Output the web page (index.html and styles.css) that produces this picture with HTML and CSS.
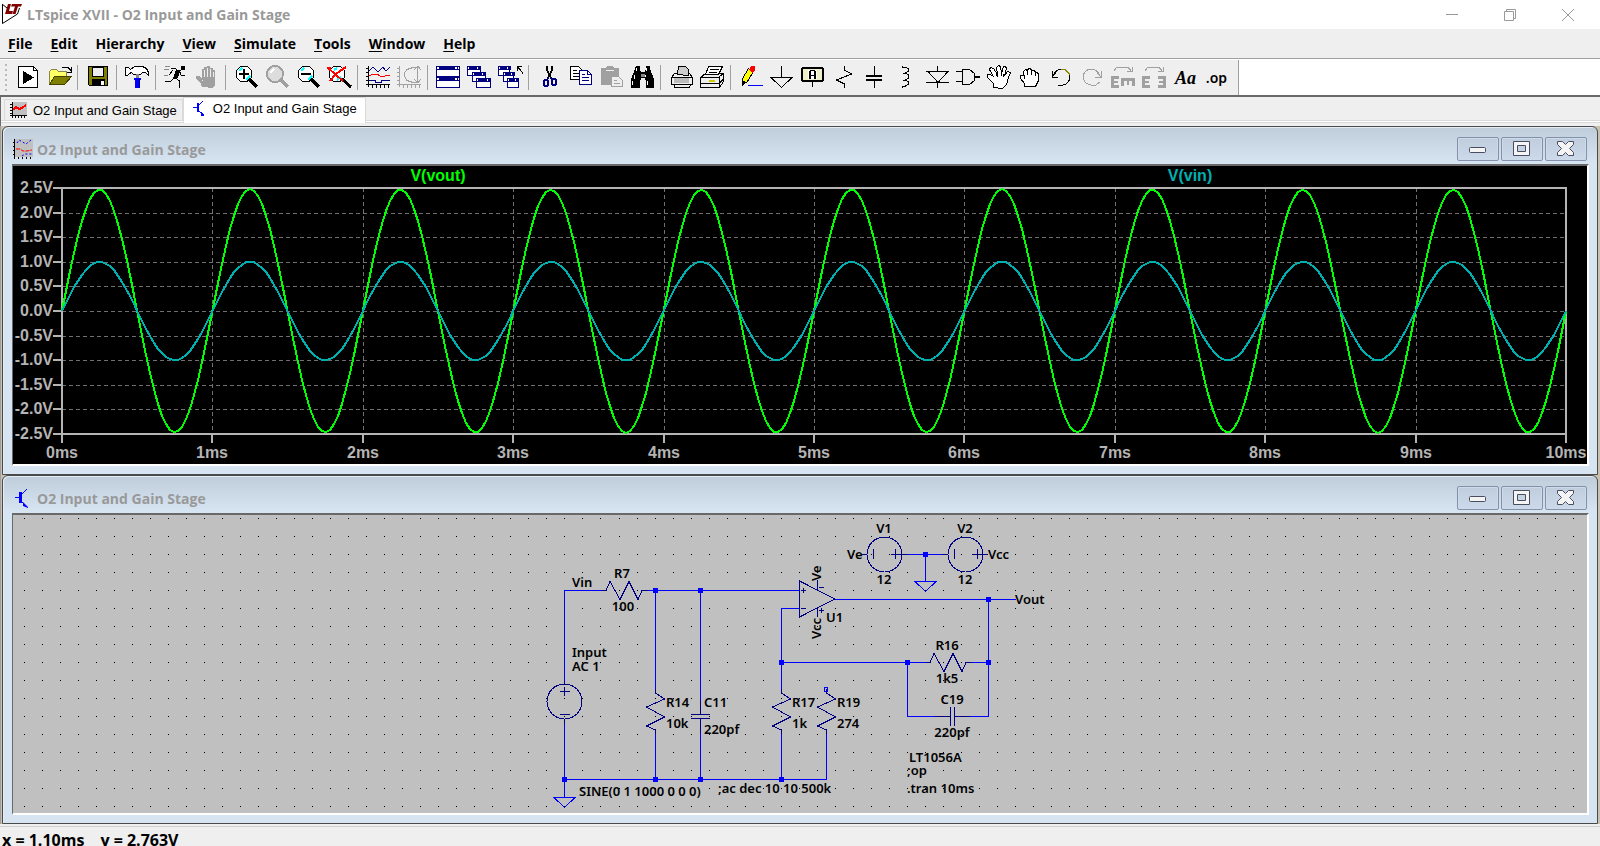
FILE: index.html
```html
<!DOCTYPE html>
<html lang="en">
<head>
    <meta charset="UTF-8">
    <meta name="viewport" content="width=device-width, initial-scale=1.0">
    <title>LTspice XVII - O2 Input and Gain Stage</title>
    <link rel="stylesheet" href="styles.css">
</head>
<body>
    <header class="titlebar">
        <svg class="app-icon" viewBox="0 0 20 21">
            <path d="M.5 0v19.500l15-9.500 2-6M0 0l5 4" fill="none" stroke="#000"/>
            <path d="M6 0h3L7 7h4l-1 3H3z M10 0h10l-1 2.500h-3L13.500 10h-3L13 2.500H9z" fill="#800000"/>
        </svg>
        <h1>LTspice XVII - O2 Input and Gain Stage</h1>
        <div class="win-buttons">
            <button aria-label="Minimize"><svg viewBox="0 0 12 12"><path d="M0 5.500h12"/></svg></button>
            <button aria-label="Restore"><svg viewBox="0 0 12 12"><path d="M.5 2.500h9v9h-9zM2.500 2V.5h9v9H10"/></svg></button>
            <button aria-label="Close"><svg viewBox="0 0 12 12"><path d="M0 0l12 12M12 0L0 12"/></svg></button>
        </div>
    </header>

    <nav class="menu">
        <button><u>F</u>ile</button>
        <button><u>E</u>dit</button>
        <button>H<u>i</u>erarchy</button>
        <button><u>V</u>iew</button>
        <button><u>S</u>imulate</button>
        <button><u>T</u>ools</button>
        <button><u>W</u>indow</button>
        <button><u>H</u>elp</button>
    </nav>

    <div class="toolbar-row">
        <div class="toolbar">
            <span class="grip"></span>
            <button aria-label="New"><svg viewBox="0 0 31 32"><path d="M5.500 4.500h15l4 4v17h-19z" fill="#fff" stroke="#000"/><path d="M20.500 4.500v4h4" fill="none" stroke="#000"/><path d="M10 9v13l11-6.500z"/></svg></button>
            <button aria-label="Open"><svg viewBox="0 0 31 32"><path d="M5.500 22.500V9.500l2-2h5l2 2h8v5" fill="#ff6" stroke="#884"/><path d="M5.500 22.500l5-8h17l-7 8z" fill="#808000" stroke="#440"/><path d="M18 6l2-1h4l3 4m-4 1h4V5" fill="none" stroke="#000"/></svg></button>
            <span class="sep"></span>
            <button aria-label="Save"><svg viewBox="0 0 31 32"><path d="M5.500 4.500h19v19h-18l-1-1z" fill="#808000" stroke="#000"/><path d="M9 5h11v9H9z" fill="#eee" stroke="#000" stroke-width="1"/><path d="M9 17h13v7H9z"/><path d="M18 19h3v4h-3z" fill="#fff"/></svg></button>
            <span class="sep"></span>
            <button aria-label="Control Panel"><svg viewBox="0 0 31 32"><path d="M3.500 5.500h3l2 2 4-3h8l4 2 2 4v3l-3-3h-3l-2 2h-7l-2-2-2 1-2 2h-2z" fill="#fff" stroke="#000"/><path d="M14 12h3v4h-3z" fill="#888"/><path d="M12 16h7v2h-1v8h-5v-8h-1z" fill="#00f"/><path d="M17 17h1v9h-1z" fill="#008"/></svg></button>
            <span class="sep"></span>
            <button aria-label="Run"><svg viewBox="0 0 31 32"><path d="M20 4h4v4h-4z"/><path d="M10 6.500h4l3 2 2 1M13 16l-3 3-6 1M14 16l5 3-1 3v4M19 10l1 3h4M12 8l-4 5" fill="none" stroke="#000"/><path d="M15 8h5l-4 9h-4z"/><path d="M4 4.500h5M3 7.500h5M3 13.500h4" stroke="#888"/></svg></button>
            <button aria-label="Halt"><svg viewBox="0 0 31 32"><path d="M10 25l-1-3-5-6v-2h3l3 3V7h2V5h3V4h3v2h3v2h2v15l-2 3z" fill="#a0a0a0"/><path d="M12.500 8v7M15.500 6v9M18.500 7v8M21.500 10v5M10 18.500h1" stroke="#efefef" fill="none"/></svg></button>
            <span class="sep"></span>
            <button aria-label="Zoom to rectangle"><svg viewBox="0 0 31 32"><circle cx="13" cy="12" r="8" fill="#fff" stroke="#000"/><path d="M8 9l3-3M15 18l4-4" stroke="#0ff" stroke-width="2"/><path d="M8 12h10M13 7v10" stroke="#000" stroke-width="2"/><path d="M18 17l8 8" stroke="#000" stroke-width="3"/></svg></button>
            <button aria-label="Pan"><svg viewBox="0 0 31 32"><circle cx="13" cy="12" r="8" fill="#ddd" stroke="#a0a0a0" stroke-width="2"/><path d="M8 11l4-4" stroke="#fff" stroke-width="2"/><path d="M18 17l8 8" stroke="#a0a0a0" stroke-width="3"/></svg></button>
            <button aria-label="Zoom back"><svg viewBox="0 0 31 32"><circle cx="13" cy="12" r="8" fill="#fff" stroke="#000"/><path d="M8 9l3-3M15 18l4-4" stroke="#0ff" stroke-width="2"/><path d="M8 12h10" stroke="#000" stroke-width="2"/><path d="M18 17l8 8" stroke="#000" stroke-width="3"/></svg></button>
            <button aria-label="Zoom full extents"><svg viewBox="0 0 31 32"><circle cx="13" cy="12" r="8" fill="#fff" stroke="#000"/><path d="M10 8l3-2M13 18l4-3" stroke="#0ff" stroke-width="2"/><path d="M18 17l9 8" stroke="#000" stroke-width="3"/><path d="M4 6l15 13M22 5l-6 4-5 4-5 6M3 6h4" fill="none" stroke="#f00" stroke-width="2"/></svg></button>
            <span class="sep"></span>
            <button aria-label="Autorange"><svg viewBox="0 0 31 32"><path d="M5.500 4v21M3 6.500h2M3 10.500h2M3 14.500h2M3 18.500h2M3 22.500h24M9.500 23v3M13.500 23v3M17.500 23v3M21.500 23v3M25.500 23v3" stroke="#000"/><path d="M6 9l4-4 5 5 5-5 3 4 4-4M6 18.500h6v2h6v-2h9" fill="none" stroke="#000080"/><path d="M6 14l4-2h4l3 2h5l5-1" fill="none" stroke="#f00"/></svg></button>
            <button aria-label="Nyquist"><svg viewBox="0 0 31 32"><path d="M5.500 4v21M3 6.500h2M3 10.500h2M3 14.500h2M3 18.500h2M3 22.500h24M9.500 23v3M13.500 23v3M17.500 23v3M21.500 23v3M25.500 23v3M23.500 5v15" stroke="#a0a0a0"/><path d="M24 5.500h-5l-6 2-3 4v2l3 5 6 2h5M20 8l4-4 3 4M20 17l4 4 3-4" fill="none" stroke="#a0a0a0"/></svg></button>
            <span class="sep"></span>
            <button aria-label="Tile"><svg viewBox="0 0 31 32"><path d="M3.500 4.500h23v21h-23z" fill="#fff" stroke="#000080"/><path d="M3 4h24v4H3zM3 14h24v5H3z" fill="#000080"/><path d="M4 5h2v2H4zM22 5h2v2h-2zM4 16h2v2H4zM22 16h2v2h-2zM25 5h1v2h-1zM25 16h1v2h-1z" fill="#fff"/></svg></button>
            <button aria-label="Cascade"><svg viewBox="0 0 31 32"><g fill="#fff" stroke="#000080"><path d="M3.500 4.500h13v9h-13z"/><path d="M8.500 10.500h13v9h-13z"/><path d="M12.500 16.500h14v9h-14z"/></g><path d="M3 4h14v4H3zM8 10h14v4H8zM12 16h15v4H12z" fill="#000080"/><path d="M4 5h1v2H4zM13 5h1v2h-1zM9 11h1v2H9zM18 11h1v2h-1zM13 17h1v2h-1zM23 17h1v2h-1z" fill="#fff"/></svg></button>
            <button aria-label="Close all"><svg viewBox="0 0 31 32"><g fill="#fff" stroke="#000080"><path d="M3.500 4.500h11v9h-11z"/><path d="M8.500 10.500h10v9h-10z"/><path d="M12.500 16.500h11v9h-11z"/></g><path d="M3 4h13v4H3zM8 10h12v4H8zM12 16h12v4H12z" fill="#000080"/><path d="M4 5h1v2H4zM12 5h1v2h-1zM9 11h1v2H9zM16 11h1v2h-1zM13 17h1v2h-1zM20 17h1v2h-1z" fill="#fff"/><path d="M22 4h5M22.500 4v5M22 4l5 6v2" fill="none" stroke="#000"/></svg></button>
            <span class="sep"></span>
            <button aria-label="Cut"><svg viewBox="0 0 31 32"><path d="M13 4v4l4 8M18 4v4l-4 8" fill="none" stroke="#000" stroke-width="2"/><path d="M15 15l-2 3M16 15l2 3" stroke="#000080"/><rect x="10" y="18" width="4" height="6" rx="2" fill="none" stroke="#000080" stroke-width="2"/><rect x="18" y="17" width="4" height="6" rx="2" fill="none" stroke="#000080" stroke-width="2"/></svg></button>
            <button aria-label="Copy"><svg viewBox="0 0 31 32"><path d="M5.500 4.500h8l3 3v10h-11z" fill="#fff" stroke="#000"/><path d="M8 8.500h4M8 11.500h6M8 14.500h6" stroke="#000"/><path d="M14.500 8.500h8l4 4v10h-12z" fill="#fff" stroke="#000080"/><path d="M22.500 8v4h4M17 12.500h3M17 15.500h7M17 18.500h7" fill="none" stroke="#000080"/></svg></button>
            <button aria-label="Paste"><svg viewBox="0 0 31 32"><path d="M5 6h5l1-2h6l1 2h5v17H5z" fill="#a0a0a0"/><path d="M10 8.500h8" stroke="#efefef"/><path d="M15.500 14.500h7l4 4v6h-11z" fill="#eee" stroke="#a0a0a0"/><path d="M18 18.500h3M18 21.500h6" stroke="#a0a0a0"/></svg></button>
            <button aria-label="Find"><svg viewBox="0 0 31 32"><path d="M9 4h4v3l1 3h4l1-3V4h4v3l4 10v9h-8v-8h-1v-2h-4v2h-1v8H4v-9l4-10z"/><path d="M9.500 6v3M7.500 13v4M5.500 19v4M19.500 6v3M18.500 13v2M20.500 19v4" stroke="#fff"/><path d="M14 12h4v3h-4z" fill="#888"/></svg></button>
            <span class="sep"></span>
            <button aria-label="Print"><svg viewBox="0 0 31 32"><path d="M5.500 15.500l3-4h15l3 4v7h-21z" fill="#efefef" stroke="#000"/><path d="M11.500 12.500l1-8h7l3 3v6z" fill="#ccc" stroke="#000"/><path d="M8 15h15v6H8z" fill="#bbb"/><path d="M5 15.500h21M8 25.500h15l2-3M8 23v3" fill="none" stroke="#000"/></svg></button>
            <button aria-label="Print setup"><svg viewBox="0 0 31 32"><path d="M3.500 15.500l5-4h18v8l-4 6h-19z" fill="#efefef" stroke="#000"/><path d="M8.500 12.500l3-8h14l-4 8z" fill="#fff" stroke="#000"/><path d="M13 7.500h9M12 10.500h8M3 15.500h19v10M22 15l5-4M3 21.500h19l5-5" fill="none" stroke="#000"/><path d="M12 18.500h6" stroke="#cc0" stroke-width="2"/></svg></button>
            <span class="sep"></span>
            <button aria-label="Wire"><svg viewBox="0 0 31 32"><path d="M6.500 22.500v-6l6-10 5 3-6 10z" fill="#ff0" stroke="#000"/><path d="M13 8l2-4h4v4l-2 3z" fill="#f00"/><path d="M6 18l4 2-4 4z"/><path d="M12 23.500h15" stroke="#00f"/></svg></button>
            <button aria-label="Ground"><svg viewBox="0 0 31 32"><path d="M14.500 4v11M3 15.500h23M4 15.500l10.500 10 10.500-10" fill="none" stroke="#000"/></svg></button>
            <button aria-label="Label net"><svg viewBox="0 0 31 32"><rect x="4" y="6" width="21" height="13" rx="2" fill="#efefc8" stroke="#000" stroke-width="2"/><rect x="10" y="8" width="9" height="9" fill="#fff"/><path d="M14.500 20v5M11.500 17V9.500l1-1h4l1 1V17M11 13.500h6" fill="none" stroke="#000"/><path d="M12.500 9v8M16.500 9v8" stroke="#000"/></svg></button>
            <button aria-label="Resistor"><svg viewBox="0 0 31 32"><path d="M15.500 4v4l7 4-15 6 8 4v4" fill="none" stroke="#000"/></svg></button>
            <button aria-label="Capacitor"><svg viewBox="0 0 31 32"><path d="M14.500 4v9M14.500 19v7" stroke="#000"/><path d="M6 14h16M6 18h16" stroke="#000" stroke-width="2"/></svg></button>
            <button aria-label="Inductor"><svg viewBox="0 0 31 32"><path d="M11.500 4v1h3l3 2v2l-3 2h-3 3l3 2v3l-3 2h-3 3l3 2v2l-3 2h-3v2" fill="none" stroke="#000"/></svg></button>
            <button aria-label="Diode"><svg viewBox="0 0 31 32"><path d="M15.500 4v22M4 9.500h23M4 20.500h23" stroke="#000"/><path d="M6 9.500h20l-10 11z" fill="#efefef" stroke="#000"/></svg></button>
            <button aria-label="Component"><svg viewBox="0 0 31 32"><path d="M3 9.500h6M3 19.500h6" stroke="#000"/><path d="M9.500 7.500h7l5 4v7l-5 4h-7z" fill="#efefef" stroke="#000"/><path d="M22 15h5" stroke="#000" stroke-width="2"/></svg></button>
            <button aria-label="Move"><svg viewBox="0 0 31 32"><path d="M9.500 25.500v-4l-6-6v-3h3l3 2-4-7 1-2 3 1 4 6-1-7 2-2 2 1 1 7 2-7h2l1 2-2 7 3-4 3 1-2 5-2 7-4 4z" fill="#fff" stroke="#000"/><path d="M12 12l2 3M17.500 11v3M20 12l-1 3" stroke="#000"/></svg></button>
            <button aria-label="Drag"><svg viewBox="0 0 31 32"><path d="M9.500 24.500v-3l-4-5v-3h3v-4l2-2 2 1 1-2h2l1 2h3l1 2h2l1 2v6l-3 6z" fill="#fff" stroke="#000"/><path d="M12.500 8v5M16.500 8v5M20.500 10v4M9.500 13v4" stroke="#000"/></svg></button>
            <button aria-label="Undo"><svg viewBox="0 0 31 32"><path d="M7 14q2-6 8-7 8 0 9 8-1 7-7 8h-5" fill="none" stroke="#000"/><path d="M15 7.500h4l5 5" fill="none" stroke="#880"/><path d="M6 9v6h6M6 15l4-4" fill="none" stroke="#000"/></svg></button>
            <button aria-label="Redo"><svg viewBox="0 0 31 32"><path d="M23 14q-2-6-8-7-8 0-9 8 1 7 8 8h5l4-3" fill="none" stroke="#a0a0a0"/><path d="M24.500 9v6H18M24 15l-4-4" fill="none" stroke="#a0a0a0"/></svg></button>
            <button aria-label="Rotate"><svg viewBox="0 0 31 32"><path d="M3 14h8v3H6v2h4v2H6v2h5v3H3zM13 16h14v8h-3v-5h-3v4h-2v-4h-3v5h-3z" fill="#a0a0a0"/><path d="M6 9l3-4h11l3 4M19 9.500h5V5" fill="none" stroke="#a0a0a0"/></svg></button>
            <button aria-label="Mirror"><svg viewBox="0 0 31 32"><path d="M3 14h8v3H6v2h4v2H6v2h5v3H3zM27 14h-8v3h5v2h-4v2h4v2h-5v3h8z" fill="#a0a0a0"/><path d="M6 9l3-4h11l3 4M19 9.500h5V5" fill="none" stroke="#a0a0a0"/></svg></button>
            <button class="aa">Aa</button>
            <button class="op">.op</button>
        </div>
    </div>

    <div class="tabs">
        <button class="tab">
            <svg viewBox="0 0 17 17"><path d="M2 0h15v13H2z" fill="#c0c0c0"/><path d="M2.500 0v16M0 2.500h2M0 5.500h2M0 8.500h2M0 11.500h2M0 13.500h17M5.500 14v2M8.500 14v2M11.500 14v2M14.500 14v2" stroke="#000"/><path d="M3 8l3-3 3 2 3-1 4-3" fill="none" stroke="#f00" stroke-width="2"/></svg>
            O2 Input and Gain Stage
        </button>
        <button class="tab active">
            <svg viewBox="0 0 17 17"><path d="M0 7.500h5M5 6l5-5M5 10l5 5" stroke="#00f" fill="none"/><path d="M4 3h2v9H4zM8 12l3 3v1H8z" fill="#00f"/></svg>
            O2 Input and Gain Stage
        </button>
    </div>

    <main class="mdi">
        <section class="child">
            <div class="child-title">
                <svg class="child-icon" viewBox="0 0 20 20"><path d="M2 0h18v18H2z" fill="#c0c0c0"/><path d="M1.500 0v20M0 3.500h2M0 7.500h2M0 11.500h2M0 15.500h2M5.500 18v2M9.500 18v2M13.500 18v2M17.500 18v2" stroke="#000"/><path d="M4 4l2-3 7 4 5-4M9 17l3-2h7" fill="none" stroke="#00f" stroke-dasharray="2 2"/><path d="M3 10h4l3 2h4l5-1" fill="none" stroke="#f00" stroke-dasharray="4 1"/></svg>
                <h2>O2 Input and Gain Stage</h2>
                <div class="child-buttons">
                    <button aria-label="Minimize"><svg viewBox="0 0 20 18"><rect x="1.500" y="7.500" width="16" height="5" rx="1"/></svg></button>
                    <button aria-label="Maximize"><svg viewBox="0 0 20 18"><path fill-rule="evenodd" d="M1.500 1.500h16v14h-16zM5.500 5.500h8v6h-8z"/></svg></button>
                    <button aria-label="Close"><svg viewBox="0 0 20 18"><path d="M1.500 1.500h5l3 3 3-3h5v3l-4 4 4 4v3h-5l-3-3-3 3h-5v-3l4-4-4-4z"/></svg></button>
                </div>
            </div>
            <div class="client plot">
                <svg id="plot" viewBox="13 166 1574 298">
                    <g id="grid"></g>
                    <g id="labels"></g>
                    <text class="vout" x="438" y="181">V(vout)</text>
                    <text class="vin" x="1190" y="181">V(vin)</text>
                    <path id="vout" class="trace"/>
                    <path id="vin" class="trace"/>
                </svg>
            </div>
        </section>

        <section class="child">
            <div class="child-title">
                <svg class="child-icon" viewBox="0 0 20 20"><path d="M2 9.500h5M7 8l7-7M7 12l7 7" stroke="#00f" fill="none" shape-rendering="crispEdges"/><path d="M6 4h3v11H6zM10 14l5 5v1l-5-2z" fill="#00f"/></svg>
                <h2>O2 Input and Gain Stage</h2>
                <div class="child-buttons">
                    <button aria-label="Minimize"><svg viewBox="0 0 20 18"><rect x="1.500" y="7.500" width="16" height="5" rx="1"/></svg></button>
                    <button aria-label="Maximize"><svg viewBox="0 0 20 18"><path fill-rule="evenodd" d="M1.500 1.500h16v14h-16zM5.500 5.500h8v6h-8z"/></svg></button>
                    <button aria-label="Close"><svg viewBox="0 0 20 18"><path d="M1.500 1.500h5l3 3 3-3h5v3l-4 4 4 4v3h-5l-3-3-3 3h-5v-3l4-4-4-4z"/></svg></button>
                </div>
            </div>
            <div class="client schematic">
                <svg id="schematic" viewBox="13 515 1574 298">
                    <defs>
                        <path id="res" d="M0-4v4l9 6-18 8 18 10-18 9 9 4v4"/>
                        <path id="resh" d="M-4 0h4l4-9 10 18 9-18 9 18 4-9h6"/>
                    </defs>
                    <g id="dots"></g>
                    <!-- wires -->
                    <path class="wire" d="M564.500 683V590.500H603M648 590.500H799M655.500 590v100M655.500 734v45M700.500 590v110M700.500 733v46M564.500 724v73M564 779.500H827M826.500 734v45M781.500 734v45M781.500 690v-82M781 608.500H799M781 662.500H926M972 662.500h16M835 599.500H1016M988.500 599v117M907.500 662v54M907 716.500h28M970 716.500h19M908 554.500h34M925.500 554v27"/>
                    <path class="wire" d="M554 797.500h21l-10.500 10zM915 581.500h21l-10.500 10zM824.500 687.500h3v4h-3z"/>
                    <path class="node" d="M562 777h5v5h-5zM653 777h5v5h-5zM698 777h5v5h-5zM779 777h5v5h-5zM653 588h5v5h-5zM698 588h5v5h-5zM779 660h5v5h-5zM905 660h5v5h-5zM986 660h5v5h-5zM986 597h5v5h-5zM923 552h5v5h-5z"/>
                    <!-- parts -->
                    <g class="part">
                        <use href="#resh" x="606" y="590.500"/>
                        <use href="#resh" x="930" y="662.500"/>
                        <use href="#res" x="655.500" y="693"/>
                        <use href="#res" x="781.500" y="693"/>
                        <use href="#res" x="826.500" y="693"/>
                        <path d="M700.500 700v14M691 714.500h19M691 718.500h19M700.500 719v14"/>
                        <path d="M935 716.500h15M950.500 707v19M954.500 707v19M955 716.500h15"/>
                        <circle cx="564.500" cy="701.500" r="17.500"/>
                        <path d="M564.500 681v3M564.500 719v5M560 691.500h10M564.500 687v9M560 714.500h10"/>
                        <circle cx="884.500" cy="554.500" r="17.500"/>
                        <path d="M862 554.500h5M873.500 549v10M891 554.500h17M895.500 549v10"/>
                        <circle cx="965.500" cy="554.500" r="17.500"/>
                        <path d="M942 554.500h6M954.500 549v10M972 554.500h16M977.500 549v10"/>
                        <path d="M799.500 581v36l35.500-18zM801 590.500h5M803.500 588v5M801 608.500h5M817.500 580v10M819 587.500h5M817.500 608v9M819 610.500h5M821.500 608v5"/>
                    </g>
                    <text x="572" y="587">Vin</text>
                    <text class="mid" x="622" y="578">R7</text>
                    <text class="mid" x="623" y="611">100</text>
                    <text x="572" y="657">Input</text>
                    <text x="572" y="671">AC 1</text>
                    <text x="666" y="707">R14</text>
                    <text x="666" y="728">10k</text>
                    <text x="704" y="707">C11</text>
                    <text x="704" y="734">220pf</text>
                    <text x="792" y="707">R17</text>
                    <text x="792" y="728">1k</text>
                    <text x="837" y="707">R19</text>
                    <text x="837" y="728">274</text>
                    <text x="826" y="622">U1</text>
                    <text class="mid" x="884" y="533">V1</text>
                    <text class="mid" x="884" y="584">12</text>
                    <text class="mid" x="965" y="533">V2</text>
                    <text class="mid" x="965" y="584">12</text>
                    <text x="847" y="559">Ve</text>
                    <text x="988" y="559">Vcc</text>
                    <text x="1015" y="604">Vout</text>
                    <text transform="translate(821 581) rotate(-90)">Ve</text>
                    <text transform="translate(821 639) rotate(-90)">Vcc</text>
                    <text class="mid" x="947" y="650">R16</text>
                    <text class="mid" x="947" y="683">1k5</text>
                    <text class="mid" x="952" y="704">C19</text>
                    <text class="mid" x="952" y="737">220pf</text>
                    <text x="909" y="762">LT1056A</text>
                    <text x="907" y="775">;op</text>
                    <text x="907" y="793">.tran 10ms</text>
                    <text x="718" y="793">;ac dec 10 10 500k</text>
                    <text x="579" y="796">SINE(0 1 1000 0 0 0)</text>
                </svg>
            </div>
        </section>
    </main>

    <footer class="status"><span>x = 1.10ms</span><span>y = 2.763V</span></footer>
    <script src="script.js"></script>
</body>
</html>
```
FILE: styles.css
```css
* {
    box-sizing: border-box;
}
html, body {
    height: 100%;
    margin: 0;
}
body {
    display: flex;
    flex-direction: column;
    overflow: hidden;
    background: #efefef;
    font-family: "Open Sans", "Noto Sans", sans-serif;
}
button {
    padding: 0;
    border: 0;
    background: none;
    color: inherit;
    font: inherit;
}
h1, h2 {
    margin: 0;
    font-size: 14px;
    font-weight: bold;
    color: #999;
}
svg {
    display: block;
}

/* title bar */
.titlebar {
    display: flex;
    align-items: center;
    flex: none;
    height: 29px;
    padding: 0 3px 0 2px;
    background: #fff;
}
.app-icon {
    width: 20px;
    height: 21px;
    margin-right: 5px;
}
.win-buttons {
    display: flex;
    margin-left: auto;
}
.win-buttons button {
    display: flex;
    align-items: center;
    justify-content: center;
    width: 58px;
    height: 29px;
}
.win-buttons svg {
    width: 12px;
    height: 12px;
    fill: none;
    stroke: #999;
}

/* menu */
.menu {
    display: flex;
    flex: none;
    gap: 18px;
    height: 29px;
    padding-left: 8px;
    font-size: 14px;
    font-weight: bold;
}
.menu u {
    text-underline-offset: 2px;
}

/* toolbar */
.toolbar-row {
    flex: none;
    height: 39px;
    border-top: 1px solid #a0a0a0;
    border-bottom: 2px solid #696969;
    background: #fff;
}
.toolbar {
    display: flex;
    width: max-content;
    height: 35px;
    margin-top: 1px;
    padding: 2px 6px 0 5px;
    border-right: 1px solid #a0a0a0;
    background: #efefef;
}
.grip {
    width: 2px;
    height: 28px;
    margin: 2px 6px 0 0;
    background: repeating-linear-gradient(#bbb 0 2px, transparent 2px 5px);
}
.toolbar button {
    width: 31px;
    height: 32px;
}
.toolbar svg {
    width: 31px;
    height: 32px;
    shape-rendering: crispEdges;
}
.sep {
    width: 1px;
    height: 25px;
    margin: 3px 5px 0 2px;
    background: #a0a0a0;
}
.toolbar .aa {
    font: italic bold 18px/32px "Liberation Serif", serif;
}
.toolbar .op {
    font: 600 14px/28px "Noto Sans", sans-serif;
}

/* document tabs */
.tabs {
    display: flex;
    flex: none;
    align-items: flex-start;
    height: 29px;
    padding-left: 3px;
    border-left: 1px solid #696969;
    background: linear-gradient(transparent 23px, #dadada 23px 24px, #fff 24px 25px, #dadada 25px 26px, transparent 26px);
}
.tab {
    display: flex;
    align-items: center;
    gap: 6px;
    height: 22px;
    margin-top: 2px;
    padding: 0 5px;
    border: 1px solid #dadada;
    border-bottom: 0;
    font-family: "Liberation Sans", Arial, sans-serif;
    font-size: 13px;
}
.tab.active {
    height: 26px;
    margin-top: 0;
    padding: 0 8px 4px 9px;
    gap: 3px;
    background: #fff;
}
.tab svg {
    width: 17px;
    height: 17px;
    shape-rendering: crispEdges;
}

/* mdi child windows */
.mdi {
    display: flex;
    flex: 1;
    flex-direction: column;
    min-height: 0;
    margin-bottom: 2px;
    padding: 0 2px 0 1px;
    border-left: 1px solid #a0a0a0;
    background: #c8c0b0;
}
.child {
    display: flex;
    flex: 1;
    flex-direction: column;
    min-height: 0;
    padding: 0 8px 8px 9px;
    border: 1px solid #4a4a4a;
    border-radius: 6px 6px 0 0;
    background: linear-gradient(#bfcddb, #d7e4f2 36px);
    box-shadow: inset 1px 1px 0 #e4edf6;
}
.child-title {
    display: flex;
    align-items: center;
    flex: none;
    height: 37px;
    padding: 7px 2px 0 1px;
}
.child-icon {
    width: 20px;
    height: 20px;
    margin-right: 4px;
}
.child-buttons {
    display: flex;
    gap: 2px;
    margin-left: auto;
}
.child-buttons button {
    display: flex;
    align-items: center;
    justify-content: center;
    width: 42px;
    height: 24px;
    border: 1px solid #8391ab;
    border-radius: 2px;
    background: linear-gradient(#c0cddd, #cbd9ea);
    box-shadow: inset 0 0 0 1px #cddaea;
}
.child-buttons svg {
    width: 20px;
    height: 18px;
    fill: #f4f4f4;
    stroke: #484e60;
}
.client {
    flex: 1;
    min-height: 0;
    border-style: solid;
    border-width: 2px 2px 2px 1px;
    border-color: #696969 #fff #fff #696969;
}
.client svg {
    width: 100%;
    height: 100%;
}

/* waveforms */
.plot {
    background: #000;
}
.plot text {
    font: bold 16px "Liberation Sans", Arial, sans-serif;
    fill: #b4b4b4;
    text-anchor: middle;
}
.plot .ylab {
    text-anchor: end;
}
.plot .vout {
    fill: #0f0;
}
.plot .vin {
    fill: #00b0b0;
}
.axis {
    fill: none;
    stroke: #b4b4b4;
    stroke-width: 2;
    shape-rendering: crispEdges;
}
.gridline {
    stroke: #707070;
    stroke-dasharray: 4 3;
    shape-rendering: crispEdges;
}
.trace {
    fill: none;
    stroke-width: 2;
    shape-rendering: crispEdges;
}
#vout {
    stroke: #0f0;
}
#vin {
    stroke: #00b0b0;
}

/* schematic */
.schematic {
    background: #c0c0c0;
}
.schematic text {
    font: 600 13px "Noto Sans", sans-serif;
}
.schematic .mid {
    text-anchor: middle;
}
.wire, .part {
    fill: none;
    stroke: #00f;
    shape-rendering: crispEdges;
}
.part {
    stroke: #000080;
}
.node {
    fill: #00f;
}

.status {
    display: flex;
    flex: none;
    gap: 16px;
    height: 20px;
    padding: 2px 0 0 2px;
    border-top: 1px solid #d0d0d0;
    font-size: 16px;
    font-weight: bold;
}
```
FILE: script.js
```js
const left = 62, right = 1566, top_ = 188, bottom = 434;
const zero = (top_ + bottom) / 2;
const perVolt = (bottom - top_) / 5;
const perMs = (right - left) / 10;

function wave(amp) {
    const points = [];
    for (let x = left; x <= right; x += 4) {
        const t = (x - left) / perMs;
        points.push(x + ' ' + Math.round(zero - amp * perVolt * Math.sin(2 * Math.PI * t)));
    }
    return 'M' + points.join('L');
}

let grid = '';
let labels = '';
let ticks = '';
for (let i = 0; i <= 10; i++) {
    const x = Math.round(left + i * perMs);
    const y = Math.round(top_ + i * perVolt / 2);
    if (i > 0 && i < 10) {
        grid += `<path class="gridline" d="M${x + 0.5} ${top_}V${bottom}M${left} ${y + 0.5}H${right}"/>`;
    }
    ticks += `M${x} ${bottom}v9M${left} ${y}h-9`;
    labels += `<text x="${x}" y="458">${i}ms</text>`;
    labels += `<text class="ylab" x="53" y="${y + 5}">${(2.5 - i / 2).toFixed(1)}V</text>`;
}
grid += `<path class="axis" d="M${left} ${top_}H${right}V${bottom}H${left}z${ticks}"/>`;
document.getElementById('grid').innerHTML = grid;
document.getElementById('labels').innerHTML = labels;
document.getElementById('vout').setAttribute('d', wave(2.47));
document.getElementById('vin').setAttribute('d', wave(1));

// snap grid of the schematic
let dots = '';
for (let y = 518; y < 813; y += 18) {
    for (let i = 0; i < 87; i++) {
        const x = 24 + i * 18 + (i > 32 ? 1 : 0);
        dots += `M${x} ${y}h1v1h-1z`;
    }
}
document.getElementById('dots').innerHTML = `<path d="${dots}"/>`;
```
